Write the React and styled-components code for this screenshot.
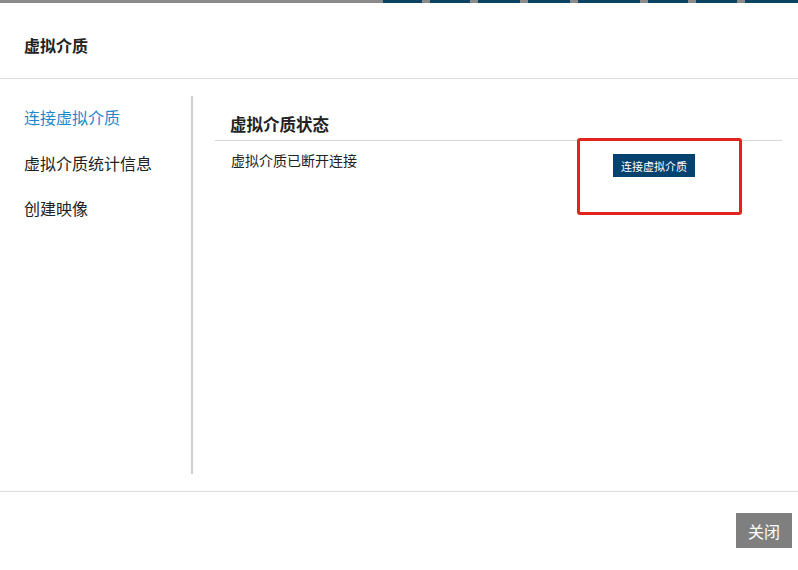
import React from 'react';
import styled, { createGlobalStyle } from 'styled-components';

const GlobalStyle = createGlobalStyle`
  html, body {
    margin: 0;
    padding: 0;
    background: #fff;
  }
  body {
    font-family: "Noto Sans CJK SC", "Liberation Sans", sans-serif;
    color: #222;
  }
`;

const Page = styled.div`
  width: 798px;
  height: 570px;
  display: flex;
  flex-direction: column;
  overflow: hidden;
  position: relative;
`;

const TopStrip = styled.div`
  height: 3px;
  flex: 0 0 3px;
  display: flex;
  gap: 8px;
  background: #8a8a8a;
  padding-left: 383px;
`;

const StripSegment = styled.div`
  height: 3px;
  background: #0d4463;
  flex: ${(p) => (p.$w ? `0 0 ${p.$w}px` : '1')};
`;

const Header = styled.div`
  height: 76px;
  flex: 0 0 76px;
  border-bottom: 1px solid #dcdcdc;
  display: flex;
  align-items: center;
  padding: 8px 0 0 24px;
  box-sizing: border-box;
  font-size: 16px;
  font-weight: bold;
  color: #222;
`;

const Body = styled.div`
  height: 413px;
  flex: 0 0 413px;
  display: flex;
  border-bottom: 1px solid #dcdcdc;
  padding: 17px 0;
  box-sizing: border-box;
`;

const Sidebar = styled.div`
  width: 193px;
  border-right: 2px solid #cfcfcf;
  padding-top: 11px;
  box-sizing: border-box;
`;

const NavItem = styled.div`
  height: 45.5px;
  line-height: 20px;
  padding-left: 24px;
  font-size: 16px;
  color: ${(p) => (p.$active ? '#1f86cc' : '#222')};
  cursor: pointer;
`;

const Content = styled.div`
  flex: 1;
  padding: 17px 16px 0 23px;
`;

const SectionTitle = styled.div`
  font-size: 16.5px;
  font-weight: bold;
  line-height: 22px;
  padding: 0 0 5px 15px;
  margin-left: -1px;
  border-bottom: 1px solid #d6d6d6;
  color: #222;
`;

const StatusRow = styled.div`
  display: flex;
  align-items: flex-start;
  padding: 10px 0 0 15px;
`;

const StatusText = styled.div`
  font-size: 14px;
  line-height: 18px;
  color: #222;
  width: 382px;
`;

const ConnectButton = styled.button`
  margin-top: 3px;
  height: 23px;
  width: 82px;
  padding: 0;
  border: none;
  background: #02426f;
  color: #fff;
  font-family: inherit;
  font-size: 11px;
  cursor: pointer;
`;

const Highlight = styled.div`
  position: absolute;
  left: 577px;
  top: 138px;
  width: 165px;
  height: 77px;
  border: 3px solid #e3231f;
  border-radius: 3px;
  box-sizing: border-box;
  pointer-events: none;
`;

const Footer = styled.div`
  flex: 1;
  display: flex;
  justify-content: flex-end;
  align-items: flex-start;
  padding: 21px 6px 0 0;
`;

const CloseButton = styled.button`
  width: 56px;
  height: 35px;
  border: none;
  background: #7f7f7f;
  color: #fff;
  font-family: inherit;
  font-size: 16px;
  padding: 0;
  cursor: pointer;
`;

const segments = [39, 40, 42, 42, 62, 40, 41];

const App = () => {
  return (
    <>
      <GlobalStyle />
      <Page>
        <TopStrip>
          {segments.map((w, i) => (
            <StripSegment key={i} $w={w} />
          ))}
          <StripSegment />
        </TopStrip>
        <Header>虚拟介质</Header>
        <Body>
          <Sidebar>
            <NavItem $active>连接虚拟介质</NavItem>
            <NavItem>虚拟介质统计信息</NavItem>
            <NavItem>创建映像</NavItem>
          </Sidebar>
          <Content>
            <SectionTitle>虚拟介质状态</SectionTitle>
            <StatusRow>
              <StatusText>虚拟介质已断开连接</StatusText>
              <ConnectButton>连接虚拟介质</ConnectButton>
            </StatusRow>
          </Content>
        </Body>
        <Footer>
          <CloseButton>关闭</CloseButton>
        </Footer>
        <Highlight />
      </Page>
    </>
  );
};

export default App;
